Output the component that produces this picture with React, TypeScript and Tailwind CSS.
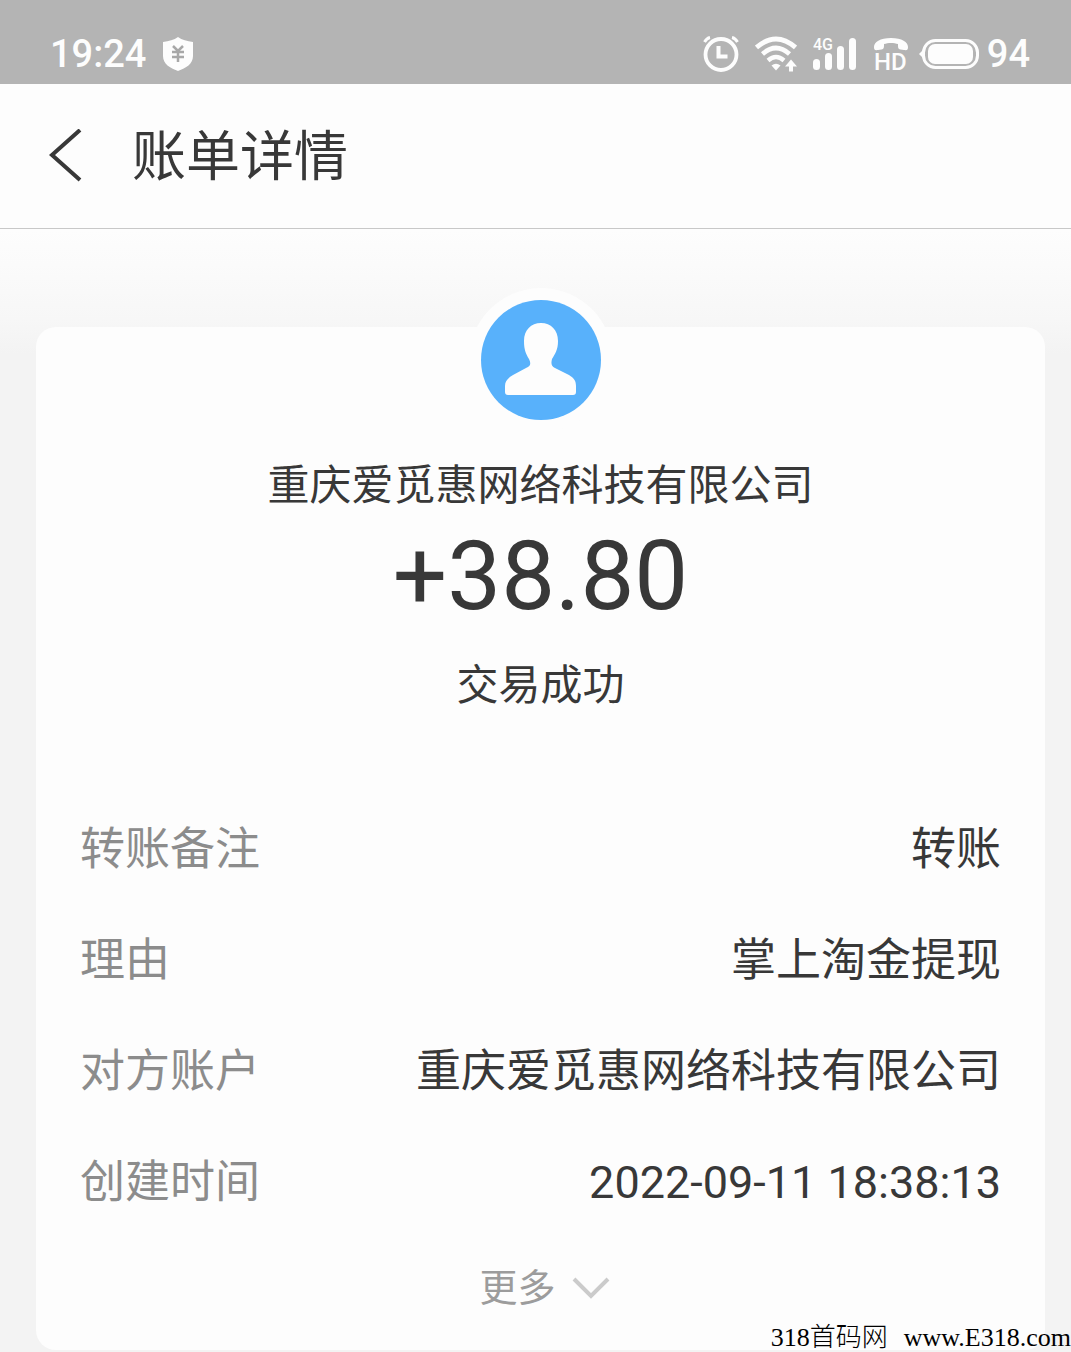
interface BillField {
  label: string;
  value: string;
}

const payee = "重庆爱觅惠网络科技有限公司";

const fields: BillField[] = [
  { label: "转账备注", value: "转账" },
  { label: "理由", value: "掌上淘金提现" },
  { label: "对方账户", value: payee },
  { label: "创建时间", value: "2022-09-11 18:38:13" },
];

function ShieldIcon() {
  return (
    <svg viewBox="0 0 32 36" className="h-9 w-8" aria-hidden="true">
      <path d="M16 1 C12 4 7 5 1 6 V20 C1 28 8 32 16 35 C24 32 31 28 31 20 V6 C25 5 20 4 16 1Z" fill="#fdfdfd" />
      <path d="M11 10 L16 15 L21 10 M10 16 H22 M10 21 H22 M16 15 V26" fill="none" stroke="#a8a8a8" strokeWidth="2.5" />
    </svg>
  );
}

function AlarmIcon() {
  return (
    <svg viewBox="0 0 36 36" className="size-9" aria-hidden="true" fill="none" stroke="#fdfdfd">
      <circle cx="18" cy="18.5" r="15.5" strokeWidth="3.8" />
      <path d="M1.5 6 C3 3.5 4.5 2 7 1.5 M34.5 6 C33 3.5 31.5 2 29 1.5" strokeWidth="3" />
      <path d="M15.5 10 V20.5 H24.5" strokeWidth="4" />
    </svg>
  );
}

function WifiIcon() {
  return (
    <svg viewBox="0 0 42 36" className="h-9 w-[42px]" aria-hidden="true" fill="none" stroke="#fdfdfd">
      <path d="M1.5 11.5 Q21 -5.5 40.5 11.5" strokeWidth="4.8" />
      <path d="M7.5 18 Q21 6 34.5 18" strokeWidth="4.6" />
      <path d="M13 24.5 Q21 17.5 29 24.5" strokeWidth="4.4" />
      <path d="M16.5 29.5 Q21 26 25.5 29.5 L21 34.5Z" fill="#fdfdfd" stroke="none" />
      <path d="M36 23.5 L42 30.5 H38 V35.5 H34 V30.5 H30Z" fill="#fdfdfd" stroke="none" />
    </svg>
  );
}

function SignalIcon() {
  return (
    <svg viewBox="0 0 44 36" className="h-9 w-11" aria-hidden="true" fill="#fdfdfd">
      <text x="0" y="14" fontSize="16" fontWeight="500" fontFamily="Roboto, sans-serif">
        4G
      </text>
      <rect x="0" y="23" width="7" height="11" rx="3.5" />
      <rect x="12" y="17" width="7" height="17" rx="3.5" />
      <rect x="24" y="10" width="7" height="24" rx="3.5" />
      <rect x="36" y="2" width="7" height="32" rx="3.5" />
    </svg>
  );
}

function HdCallIcon() {
  return (
    <svg viewBox="0 0 36 42" className="-mb-[6px] h-[42px] w-9" aria-hidden="true" fill="#fdfdfd">
      <path d="M1 11 C1 6 7 2 18 2 C29 2 35 6 35 11 C35 14 34 14.5 31 14 L27.5 13.5 C25 13 25 12 25 8 C21 6.5 15 6.5 11 8 C11 12 11 13 8.5 13.5 L5 14 C2 14.5 1 14 1 11Z" />
      <text x="1" y="34" fontSize="24" fontWeight="500" fontFamily="Roboto, sans-serif">
        HD
      </text>
    </svg>
  );
}

function BatteryIcon() {
  return (
    <svg viewBox="0 0 60 32" className="h-8 w-[60px]" aria-hidden="true">
      <path d="M6 10 L0 16 L6 22Z" fill="#fdfdfd" />
      <rect x="4.5" y="2.5" width="54" height="27" rx="12" fill="none" stroke="#fdfdfd" strokeWidth="3" />
      <rect x="9" y="6" width="45" height="20" rx="7" fill="#fdfdfd" />
    </svg>
  );
}

function StatusBar() {
  return (
    <div className="flex h-[84px] items-center justify-between bg-[#b4b4b4] pt-6 pr-[41px] pl-[50px] text-[38px] leading-10 font-medium text-[#fdfdfd]">
      <div className="flex items-center gap-4">
        <span>19:24</span>
        <ShieldIcon />
      </div>
      <div className="flex items-center">
        <div className="flex items-center gap-4">
          <AlarmIcon />
          <WifiIcon />
          <SignalIcon />
          <HdCallIcon />
        </div>
        <div className="ml-[10px] flex items-center gap-2">
          <BatteryIcon />
          <span>94</span>
        </div>
      </div>
    </div>
  );
}

function Header() {
  return (
    <header className="flex h-[145px] items-center gap-[50px] border-b border-[#c8c8c8] bg-[#fdfdfd] pl-12">
      <button type="button" aria-label="返回">
        <svg viewBox="0 0 34 54" className="h-[54px] w-[34px]" fill="none" stroke="#383838" strokeWidth="4">
          <path d="M32 1 L4 26 L32 51" />
        </svg>
      </button>
      <h1 className="pt-1 text-[54px] leading-[64px]">账单详情</h1>
    </header>
  );
}

function Avatar() {
  return (
    <div className="-mt-[39px] rounded-full bg-[#fdfdfd] p-3">
      <svg viewBox="0 0 120 120" className="size-[120px]" aria-hidden="true">
        <circle cx="60" cy="60" r="60" fill="#58b1fb" />
        <path
          d="M60 23 C70 23 77 30 77 41 C77 50 74 54 71 59 C70 63 70 66 74 68 L88 75 C93 78 95 81 95 86 V92 Q95 95 92 95 H27 Q24 95 24 92 V86 C24 81 27 78 32 75 L45 68 C50 66 50 63 48 59 C45 54 43 50 43 41 C43 30 50 23 60 23Z"
          fill="#fdfdfd"
        />
      </svg>
    </div>
  );
}

export default function App() {
  return (
    <div className="relative flex min-h-screen flex-col bg-[#f3f3f3] font-['Roboto','Noto_Sans_CJK_SC',sans-serif] text-[#383838]">
      <StatusBar />
      <Header />

      <main className="grow bg-[linear-gradient(to_bottom,#fdfdfd_0px,#fbfbfb_35px,#f7f7f7_90px,#f3f3f3_125px)] pt-[98px] pr-[26px] pl-9">
        <section className="flex flex-col items-center rounded-[20px] bg-[#fdfdfd] px-11 pb-8">
          <Avatar />
          <h2 className="mt-6 text-[42px] leading-[60px]">{payee}</h2>
          <p className="text-[96px] leading-[120px]">+38.80</p>
          <p className="mt-5 text-[42px] leading-[60px]">交易成功</p>

          <dl className="mt-[78px] w-full text-[45px] leading-[111px]">
            {fields.map((field) => (
              <div key={field.label} className="flex justify-between">
                <dt className="text-[#8c8c8c]">{field.label}</dt>
                <dd>{field.value}</dd>
              </div>
            ))}
          </dl>

          <button type="button" className="mt-5 flex items-center gap-4 pl-2 text-[38px] leading-[60px] text-[#9c9c9c]">
            更多
            <svg viewBox="0 0 38 22" className="h-[22px] w-[38px]" fill="none" stroke="#cbcbcb" strokeWidth="4">
              <path d="M2 2 L19 19 L36 2" />
            </svg>
          </button>
        </section>
      </main>

      <p className="absolute right-0 bottom-0 flex items-baseline gap-4 font-['Liberation_Serif','Noto_Sans_CJK_SC',serif] text-[26px] leading-7 text-black">
        <span>
          318<span className="font-light">首码网</span>
        </span>
        <span>www.E318.com</span>
      </p>
    </div>
  );
}
